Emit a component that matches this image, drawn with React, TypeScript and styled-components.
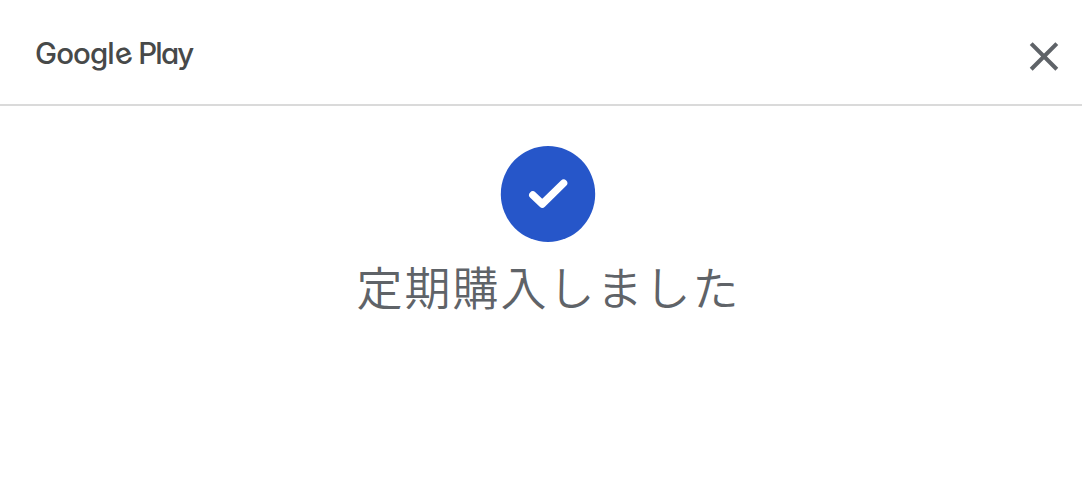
import styled, { createGlobalStyle } from 'styled-components';

const GlobalStyle = createGlobalStyle`
  * {
    box-sizing: border-box;
  }

  body {
    margin: 0;
    background: #fff;
  }
`;

const Page = styled.div`
  min-height: 100vh;
  color: #5f6368;
  font-family: 'Noto Sans CJK JP', sans-serif;
`;

const Header = styled.header`
  display: flex;
  align-items: center;
  justify-content: space-between;
  height: 106px;
  padding: 7px 22px 0 35px;
  border-bottom: 2px solid #dadada;
`;

const Brand = styled.span`
  display: flex;
  gap: 8px;
  margin-bottom: 5px;
  color: #474949;
  font-family: Inter, sans-serif;
  font-size: 29.5px;
  font-weight: 500;
  line-height: 36px;
  font-feature-settings: 'cv11';
  white-space: nowrap;
`;

const BrandWord = styled.span<{ $spacing: number }>`
  letter-spacing: ${({ $spacing }) => $spacing}px;
`;

const TiltedLetter = styled.span`
  display: inline-block;
  transform: rotate(-20deg);
`;

const CloseButton = styled.button`
  display: flex;
  padding: 0;
  border: none;
  background: none;
  color: #5f6368;
  cursor: pointer;
`;

const Content = styled.main`
  display: flex;
  flex-direction: column;
  align-items: center;
  padding: 40px 0 0 14px;
`;

const Message = styled.h1`
  margin: 7px 0 0;
  padding-left: 1px;
  font-size: 46px;
  font-weight: 350;
  line-height: 72px;
  letter-spacing: 2px;
`;

export default function App() {
  return (
    <>
      <GlobalStyle />
      <Page>
        <Header>
          <Brand>
            <BrandWord $spacing={-0.9}>
              Googl<TiltedLetter>e</TiltedLetter>
            </BrandWord>
            <BrandWord $spacing={-1.9}>Play</BrandWord>
          </Brand>
          <CloseButton type="button" aria-label="閉じる">
            <svg width="32" height="32" viewBox="0 0 32 32" fill="none">
              <path d="M3.2 3.6 28.8 29.2M28.8 3.6 3.2 29.2" stroke="currentColor" strokeWidth="4.1" />
            </svg>
          </CloseButton>
        </Header>
        <Content>
          <svg width="96" height="96" viewBox="0 0 96 96" fill="none">
            <ellipse cx="48" cy="48" rx="47.2" ry="48" fill="#2656c9" />
            <path
              d="M32.8 49 42.3 58 63.6 37.2"
              stroke="#fff"
              strokeWidth="7.4"
              strokeLinecap="round"
              strokeLinejoin="round"
            />
          </svg>
          <Message>定期購入しました</Message>
        </Content>
      </Page>
    </>
  );
}
